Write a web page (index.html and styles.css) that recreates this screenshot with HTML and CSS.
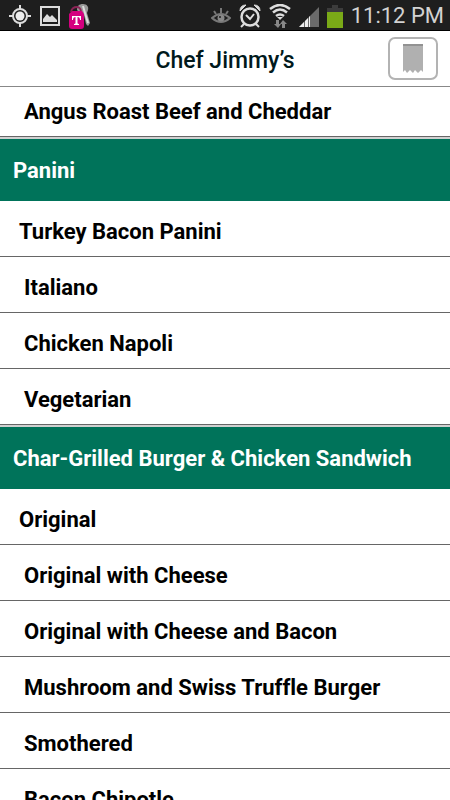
FILE: index.html
```
<!DOCTYPE html>
<html lang="en">
<head>
    <meta charset="UTF-8">
    <meta name="viewport" content="width=device-width, initial-scale=1.0">
    <title>Chef Jimmy's</title>
    <link rel="stylesheet" href="styles.css">
</head>
<body>

<div class="status-bar">
    <div class="status-left">
        <svg width="22" height="22" viewBox="0 0 22 22" fill="none" stroke="#ddd" stroke-width="2">
            <circle cx="11" cy="11" r="7"/>
            <circle cx="11" cy="11" r="4.5" fill="#eee" stroke="none"/>
            <path d="M11 0v4M11 18v4M0 11h4M18 11h4"/>
        </svg>
        <svg width="20" height="22" viewBox="0 0 20 22">
            <rect x="1" y="2" width="18" height="18" fill="none" stroke="#ddd" stroke-width="2"/>
            <path d="M3 17v-3l4-5 3 3 2-2 5 5v2z" fill="#ddd"/>
        </svg>
        <svg width="22" height="26" viewBox="0 0 22 26">
            <path d="M8 7c0-4 2-6 6-6 4 0 6 3 5 6l-1 3 3 10-2 3-2-2-2-9-5-3z" fill="#999"/>
            <path d="M14 3l2 7 3 10" fill="none" stroke="#ddd" stroke-width="2"/>
            <path d="M3 8h10l2 3v12q0 3-3 3H3q-3 0-3-3V11z" fill="#d5007f"/>
            <path d="M2 9q1-5 6-5 3 0 4 4" fill="none" stroke="#8b2456" stroke-width="2"/>
            <path d="M3 13h9v4h-1q0-3-2.5-3v6q0 1 1.5 1v1H5v-1q1.5 0 1.5-1v-6Q4 14 4 17H3z" fill="#fff"/>
        </svg>
    </div>
    <div class="status-right">
        <svg width="20" height="18" viewBox="0 0 20 18" fill="none" stroke="#777" stroke-width="2">
            <path d="M1 11q9-8 18 0-9 8-18 0z"/>
            <circle cx="10" cy="11" r="3.5" fill="#888" stroke="none"/>
            <path d="M10 1v5M3 4l2 3M17 4l-2 3"/>
            <circle cx="9" cy="10" r="1" fill="#1e1e1e" stroke="none"/>
        </svg>
        <svg width="22" height="24" viewBox="0 0 22 24" fill="none" stroke="#ddd" stroke-width="2">
            <circle cx="11" cy="13" r="8.5" stroke-width="2.5"/>
            <path d="M7 11l4 4 4-5M5 20l-3 3M17 20l3 3"/>
            <path d="M1 7q0-6 6-6zM21 7q0-6-6-6z" fill="#ddd" stroke-width="1"/>
        </svg>
        <svg width="22" height="24" viewBox="0 0 22 24" fill="none" stroke="#ddd" stroke-width="2.5">
            <path d="M1 5q10-8 20 0M4 8.5q7-6 14 0M7 12q4-3 8 0"/>
            <path d="M8 13h6l-3 3z" fill="#ddd" stroke="none"/>
            <path d="M7 16h3v4h2l-3 4-4-4h2zM13 24h3v-4h2l-4-4-3 4h2z" fill="#888" stroke="none"/>
        </svg>
        <svg width="20" height="22" viewBox="0 0 20 22">
            <path d="M0 22L20 2v20z" fill="#6b6b6b"/>
            <path d="M0 22l5-5v5zM6 22v-6l3-3v9zM10 22V12l1-1v11z" fill="#eee"/>
        </svg>
        <svg width="16" height="24" viewBox="0 0 16 24">
            <path d="M5 1h6v3h5v4H0V4h5z" fill="#3c3c3c"/>
            <path d="M0 8h16v16H0z" fill="#7aaa17"/>
        </svg>
        <span class="clock">11:12 PM</span>
    </div>
</div>

<header class="title-bar">
    <h1>Chef Jimmy’s</h1>
    <button class="receipt-button" type="button" aria-label="Order">
        <svg width="20" height="29" viewBox="0 0 20 29">
            <path d="M0 0h20v28l-2-2-3 3-3-3-2 3-3-3-3 3-2-3-2 2z" fill="#b0b0b0"/>
            <path d="M0 0h20v2H0z" fill="#929292"/>
        </svg>
    </button>
</header>

<main class="menu">
    <ul>
        <li><a href="#">Angus Roast Beef and Cheddar</a></li>
    </ul>

    <h2>Panini</h2>
    <ul>
        <li><a href="#">Turkey Bacon Panini</a></li>
        <li><a href="#">Italiano</a></li>
        <li><a href="#">Chicken Napoli</a></li>
        <li><a href="#">Vegetarian</a></li>
    </ul>

    <h2>Char-Grilled Burger &amp; Chicken Sandwich</h2>
    <ul>
        <li><a href="#">Original</a></li>
        <li><a href="#">Original with Cheese</a></li>
        <li><a href="#">Original with Cheese and Bacon</a></li>
        <li><a href="#">Mushroom and Swiss Truffle Burger</a></li>
        <li><a href="#">Smothered</a></li>
        <li><a href="#">Bacon Chipotle</a></li>
    </ul>
</main>

</body>
</html>
```
FILE: styles.css
```
* {
    box-sizing: border-box;
}
body {
    font-family: Roboto, 'Liberation Sans', sans-serif;
    font-variant-ligatures: none;
    background: white;
    color: #000;
    margin: 0;
    height: 100vh;
    display: flex;
    flex-direction: column;
    overflow: hidden;
}
.status-bar {
    flex: none;
    display: flex;
    justify-content: space-between;
    height: 31px;
    padding: 1px 6px 0 9px;
    background: #1e1e1e;
    border-bottom: 1px solid #000;
}
.status-left, .status-right {
    display: flex;
    align-items: center;
}
.status-left {
    gap: 9px;
}
.status-right {
    gap: 8px;
}
.clock {
    font-size: 22px;
    line-height: 29px;
    color: #d2d2d2;
}
.title-bar {
    flex: none;
    display: grid;
    grid-template-columns: 1fr auto 1fr;
    align-items: center;
    height: 56px;
    padding: 0 12px;
    border-bottom: 1px solid #888;
}
.title-bar h1 {
    grid-column: 2;
    margin: 3px 0 0;
    font-size: 23px;
    font-weight: 500;
    color: #00191c;
}
.receipt-button {
    justify-self: end;
    display: flex;
    align-items: center;
    justify-content: center;
    width: 50px;
    height: 43px;
    padding: 0;
    background: white;
    border: 2px solid #b3b3b3;
    border-radius: 7px;
}
/* the list is scrolled a little way under the title bar */
.menu {
    flex: 1;
    min-height: 0;
    overflow: hidden;
    display: flex;
    flex-direction: column;
}
.menu ul {
    flex: none;
    list-style: none;
    margin: 0;
    padding: 0;
}
.menu > ul:first-child {
    margin-top: -6px;
}
.menu h2 {
    flex: none;
    margin: 0;
    padding: 2px 13px 0;
    font-size: 22px;
    font-weight: 700;
    line-height: 60px;
    color: white;
    background: #00735a;
    border-top: 2px solid #d0d0d0;
}
.menu a {
    display: block;
    height: 56px;
    padding: 7px 24px 0;
    font-size: 22px;
    font-weight: 700;
    line-height: 48px;
    color: #000;
    text-decoration: none;
    white-space: nowrap;
    border-bottom: 1px solid #666;
}
.menu h2 + ul li:first-child a {
    padding-left: 19px;
}
```
